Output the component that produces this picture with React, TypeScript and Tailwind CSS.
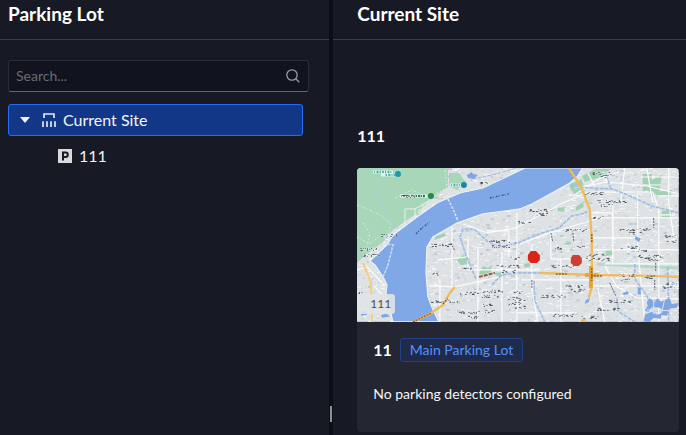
import { useState } from "react";

type Label = [x: number, y: number, width: number];

// Place-name marks, too small to read at this scale
const labels: Label[] = [
  [24, 67, 16], [3, 81, 19], [6, 87, 17], [44, 28, 14], [72, 77, 22], [75, 106, 7],
  [74, 133, 28], [103, 125, 18], [124, 123, 22], [125, 128, 16], [131, 73, 28], [134, 78, 20],
  [106, 100, 10], [140, 98, 22], [145, 103, 14], [154, 90, 8], [150, 130, 14], [151, 136, 13],
  [102, 144, 20], [110, 149, 14], [124, 137, 13], [128, 143, 9], [160, 54, 13], [158, 133, 10],
  [172, 42, 20], [178, 46, 14], [209, 62, 21], [228, 25, 18], [239, 33, 30],
  [244, 37, 12], [236, 5, 18], [242, 8, 10], [263, 61, 30], [270, 65, 14], [280, 82, 12],
  [279, 88, 26], [288, 91, 20], [264, 79, 16], [197, 80, 10], [220, 79, 9], [230, 87, 18],
  [228, 91, 26], [194, 98, 24], [209, 118, 18], [214, 122, 14], [263, 107, 14], [264, 111, 10],
  [184, 128, 27], [195, 147, 22], [225, 149, 16], [239, 141, 24], [252, 133, 22],
  [287, 109, 10], [307, 68, 14], [310, 73, 9], [309, 115, 11], [306, 119, 15],
  [0, 125, 7], [157, 124, 9], [158, 139, 10], [123, 15, 10], [236, 49, 10],
];

const minorRoads = [
  "M159 60L206 35L232 24", "M163 76L190 66L240 51", "M130 63H152V90", "M111 72V102H184",
  "M194 65V91H245", "M235 50H322", "M235 70H281", "M256 33V96", "M281 26V80L288 154",
  "M302 42V154", "M234 45H256V70", "M235 82H322", "M248 96H322M165 112H234", "M175 76V120L181 154",
  "M204 91V154", "M121 80V154", "M145 84V154", "M81 92L112 89", "M72 118L98 119L142 109",
  "M106 56L130 65L159 60", "M236 24H296L302 42", "M268 0L264 34", "M218 20L250 14L290 18L322 26",
  "M0 102L10 99L27 117", "M17 118L30 132", "M248 98L260 119L280 130L322 131", "M290 0L296 35",
  "M312 0V35L318 76", "M161 145H220", "M235 118H322", "M241 120L248 154", "M83 111V154M95 58V117M160 45V154",
  "M284 9H318M286 17H304M300 28H322M304 47H318", "M216 28L242 11L262 4", "M231 5L238 18M246 4L250 14",
];

// Deterministic scatter used for the building texture and label strokes
const scatter = (count: number, seed: number) => {
  let value = seed;
  const next = () => {
    value = (value * 16807) % 2147483647;
    return value / 2147483647;
  };
  return Array.from({ length: count }, () => ({
    x: Math.floor(next() * 322),
    y: Math.floor(next() * 154),
    size: 1 + Math.floor(next() * 4),
    tone: next(),
  }));
};

const blocks = scatter(2600, 4711);
const marks = labels.map(([x, y, width], i) => ({
  x,
  y,
  width,
  strokes: scatter(Math.round(width * 0.8), i * 331 + 97).map((s) => ({
    x: x + (s.x % width),
    y: y + (s.y % 3) - 1,
    w: 1 + (s.size > 2 ? 1 : 0),
    opacity: 0.4 + s.tone * 0.5,
  })),
}));

const CityMap = () => (
  <svg
    viewBox="0 0 322 154"
    className="block w-full"
    role="img"
    aria-label="Map of site 111"
  >
    <rect width="322" height="154" fill="#dee2e5" />
    {blocks.map((b, i) => (
      <rect
        key={i}
        x={b.x}
        y={b.y}
        width={b.size}
        height={b.tone > 0.5 ? 1 : 2}
        fill={b.tone > 0.48 ? "#f3f5f6" : b.tone > 0.1 ? "#d5dadd" : "#c3cbd0"}
      />
    ))}

    {/* Parks */}
    <path d="M0 0H91V19L73 32L60 45L36 62L26 74L6 89L0 95Z" fill="#a8d6b8" />
    <path d="M92 5L102 5L109 14L100 22L92 18Z" fill="#a8d6b8" />
    <g fill="#a1d1b2">
      <path d="M101 90l6-3 6 4-1 5-8 1-4-4z" />
      <path d="M79 68l9-3 1 3-12 4z" />
      <path d="M213 16l12-5 3 12-10 4-5-7z" />
      <path d="M225 8l14-7h15l-10 8-16 5z" />
      <path d="M286 6l9 0 0 6 10-5-2 16-7 4-6-5-4 2z" />
      <path d="M299 24l16-2-1 6-8-1-6 3z" />
      <path d="M305 43l10-1v7l-10 1zM249 82l7-1v6l-7 1z" />
      <path d="M219 39l7-5 1 5-8 4zM201 40l7-1-1 5-6-1z" />
      <path d="M122 106l4-8 5 2 4-3-1 7-9 3zM137 105l9-1 2 3-6 3zM167 96l5-1 2 3-6 2zM207 76l7-2 1 2-5 1z" />
    </g>
    <path d="M240 96L280 98L322 100" stroke="#b9d6c8" strokeWidth="3" fill="none" />
    <g stroke="#dcf1e4" fill="none" strokeDasharray="2 2 1 2">
      <path d="M22 3L21 30L30 47L36 55L33 63" strokeWidth="2" stroke="#a9cfe0" />
      <path d="M0 37L10 41L23 47L34 56L31 66" />
      <path d="M53 62L64 38L80 26" />
      <path d="M88 2L90 20L76 28M0 69L12 76L27 66M6 55L13 65L10 79" />
      <path d="M38 30L55 22L72 30" />
    </g>
    <path d="M48 57V41H58V50M58 41L72 33M66 36V45" stroke="#e6f3eb" fill="none" />

    {/* Minor roads */}
    <g fill="none" stroke="#fbfcfc" strokeWidth="1.2">
      {minorRoads.map((d) => (
        <path key={d} d={d} />
      ))}
    </g>

    {/* Points of interest */}
    <path d="M16 4h20M24 7h14M43 28h27M93 17h12" stroke="#dff4f1" strokeWidth="3" strokeDasharray="4 1 2 1" />
    <path d="M17 4h18M29 7h9M94 17h9" stroke="#2c9d9c" strokeWidth="1.6" strokeDasharray="1 1.5 2 1" />
    <path d="M44 28h24" stroke="#39705a" strokeWidth="2" strokeDasharray="1 1 2 1" />
    <circle cx="41" cy="6" r="3" fill="#179aab" />
    <circle cx="107" cy="17" r="3" fill="#1588a8" />
    <circle cx="74" cy="28" r="3" fill="#238a49" />

    {/* River */}
    <path
      d="M168 0L126 20L103 25L80 35L60 49L36 67L30 77L13 93L18 97L26 109L30 117L29 125L36 154H82L76 142L71 129L69 105L70 79L76 69L100 55L126 46L163 41L175 36L195 25L213 15L220 9L226 0Z"
      fill="#80a7e6"
      stroke="#eef1f3"
      strokeWidth="1.2"
    />
    <path d="M26 109L31 97L36 77L31 76L27 68" stroke="#c9dbf1" strokeWidth="1.6" strokeDasharray="3 1" fill="none" />
    <path d="M91 31L96 41L101 53" stroke="#d9e6f7" strokeWidth="1.5" strokeDasharray="3 1" />
    <path d="M59 66L65 60L73 54M133 30L142 28L152 26" fill="none" stroke="#375f9e" strokeWidth="1.4" strokeDasharray="2 1 1 2" />

    {/* Canals and lakes */}
    <g fill="none" stroke="#9fbce5" strokeWidth="1.6" strokeDasharray="4 1">
      <path d="M119 111L109 87L103 69L106 61L117 61L130 73L142 79L161 75L185 65L202 60L215 48L230 45" />
      <path d="M213 18L232 20L256 21L271 27L295 38L322 45M254 21L249 4" />
      <path d="M135 117L145 107L163 105H184M177 113L178 133L188 154M278 96V111L290 128L299 147" />
      <path d="M116 11L139 6L160 0" strokeWidth="1" />
      <path d="M260 130L262 144L278 154M311 99L312 154M315 114L320 118" />
    </g>
    <g fill="#7fa5e2">
      <path d="M110 7l5-3 1 2 5 1-4 4-6-1zM5 144l5-1v4l-6 1zM24 147l6-1 2 3-7 1z" />
      <path d="M293 130l5 4 3-4 4 5-5 5-5-1-3 5-4-1 3-5-1-4z" />
      <path d="M303 134l10-4 2 6 7-1-2 5-7 1-3 7-6-1 1-6-5-2z" />
      <path d="M288 147l7-3 4 3 6-1-1 5-7-1-4 4h-6zM229 132l4-2-1 4-4 2z" />
      <path d="M279 68l5 3-2 3-4-3zM281 119l3 1v7l-3-1zM266 125l5-2 1 3-5 1z" />
    </g>
    <path d="M297 132v14M308 131l-3 14M290 142l25 1" stroke="#d8e2ee" fill="none" />

    {/* Highways */}
    <g fill="none" stroke="#f0bb5a" strokeWidth="2.4">
      <path d="M6 95L14 115L15 154" strokeWidth="2" stroke="#f5ce7b" />
      <path d="M56 154L73 146L86 137L93 125L98 119" />
      <path d="M212 0L225 20L233 42L235 72V119L232 130" />
      <path d="M183 105L234 107L291 108L322 109" />
      <path d="M224 154l5-3" />
    </g>
    <path d="M234 98V120M228 107h13" stroke="#e5a333" strokeWidth="3.5" />
    <path d="M56 154L75 145M86 136l5-5M199 106h11M234 108h11M290 108h8M235 66v8M235 100v13" stroke="#8f6430" strokeWidth="1.5" strokeDasharray="2 1" />
    <path d="M122 109L138 105" stroke="#925e3f" strokeWidth="2" strokeDasharray="4 1" />
    <path d="M94 75l4 8M253 115l6 13M297 50v10M299 95v9M298 112v10M194 65l2 9M216 65l1 9M175 112v8" stroke="#59636e" strokeDasharray="2 1" />

    {/* Labels */}
    {marks.map((mark) => (
      <g key={`${mark.x}-${mark.y}`}>
        <path d={`M${mark.x} ${mark.y}h${mark.width}`} stroke="#f8fafb" strokeWidth="3" strokeOpacity="0.35" />
        {mark.strokes.map((s, i) => (
          <rect key={i} x={s.x} y={s.y} width={s.w} height="1" fill="#3f4852" fillOpacity={s.opacity} />
        ))}
      </g>
    ))}

    {/* Site pins */}
    <path d="M174 83h5l4 4v5l-3 3h-6l-3-3v-5z" fill="#da2417" />
    <path d="M216 87h6l3 3v5l-3 3h-5l-3-3v-5z" fill="#cf4034" />
  </svg>
);

const GateIcon = () => (
  <svg width="14" height="14" viewBox="0 0 14 14" fill="none" stroke="#e3e8f3" aria-hidden="true">
    <path d="M2 5V1H12V5" strokeWidth="1.7" />
    <path d="M1 8.3V14M5 8.3V14M9 8.3V14M13 8.3V14" strokeWidth="1.7" />
  </svg>
);

const ParkingIcon = () => (
  <svg width="14" height="14" viewBox="0 0 14 14" aria-hidden="true">
    <path d="M0 0h14v14H0z" fill="#d9dadc" />
    <path d="M5 11.5V3.5h2.6a2.2 2.2 0 0 1 0 4.4H5" fill="none" stroke="#171a24" strokeWidth="2" />
  </svg>
);

const SearchIcon = () => (
  <svg width="14" height="14" viewBox="0 0 14 14" fill="none" stroke="#9a9ca2" strokeWidth="1.3" aria-hidden="true">
    <circle cx="6" cy="6" r="5.2" />
    <path d="M9.8 9.8L13.3 13.3" />
  </svg>
);

const App = () => {
  const [query, setQuery] = useState("");
  const [open, setOpen] = useState(true);

  return (
    <div className="flex min-h-screen bg-[#171a24] font-['Lato',sans-serif] text-[#f4f5f7]">
      <aside className="w-[48%] shrink-0">
        <header className="flex h-10 items-start border-b border-[#3a3d46] px-2 pt-0.5">
          <h1 className="text-[19px] leading-6 font-bold text-white">Parking Lot</h1>
        </header>

        <div className="pt-5 pr-5 pl-2">
          <label className="flex h-8 items-center rounded-[3px] border border-[#2a2d37] border-b-[#62656c] bg-[#11141e] pr-2 pl-[7px]">
            <input
              type="text"
              aria-label="Search"
              placeholder="Search..."
              value={query}
              onChange={(e) => setQuery(e.target.value)}
              className="min-w-0 flex-1 bg-transparent text-sm leading-5 outline-none placeholder:text-[#686b72]"
            />
            <SearchIcon />
          </label>

          <nav className="mt-3 pr-1.5">
            <button
              type="button"
              aria-expanded={open}
              onClick={() => setOpen(!open)}
              className="flex h-8 w-full items-center rounded-[3px] border border-[#256bf4] bg-[#123786] pl-[11px] text-base"
            >
              <svg width="10" height="6" viewBox="0 0 10 6" aria-hidden="true">
                <path d="M0 0h10L5 6z" fill="#f0f3fa" />
              </svg>
              <span className="ml-3">
                <GateIcon />
              </span>
              <span className="ml-[7px]">Current Site</span>
            </button>
            {open && (
              <button type="button" className="mt-1 flex h-8 w-full items-center gap-[7px] pl-[50px] text-base">
                <ParkingIcon />
                111
              </button>
            )}
          </nav>
        </div>
      </aside>

      <div className="flex w-1 shrink-0 items-end justify-center bg-[#0b0e16] pb-[13px]">
        <div className="h-4 w-0.5 bg-[#8d8f93]" />
      </div>

      <main className="min-w-0 flex-1">
        <header className="flex h-10 items-start border-b border-[#3a3d46] px-6 pt-0.5">
          <h2 className="text-[19px] leading-6 font-bold text-white">Current Site</h2>
        </header>

        <section className="pt-[84px] pr-[7px] pb-[3px] pl-6">
          <h3 className="text-base leading-6 font-bold text-white">111</h3>

          <article className="mt-5 overflow-hidden rounded bg-[#242731]">
            <div className="relative">
              <CityMap />
              <span className="absolute bottom-2 left-0 rounded-r-[3px] bg-[#e0e4e7]/90 pr-1 pl-[13px] text-xs leading-5 text-[#4b4d52]">
                111
              </span>
            </div>
            <div className="px-4 pt-4 pb-[26px]">
              <div className="flex items-center gap-2">
                <h4 className="text-base leading-6 font-bold text-white">11</h4>
                <span className="rounded-[3px] border border-[#204189] bg-[#202b4c] px-[9px] text-sm leading-[22px] text-[#5590fa]">
                  Main Parking Lot
                </span>
              </div>
              <p className="mt-5 text-sm leading-6">No parking detectors configured</p>
            </div>
          </article>
        </section>
      </main>
    </div>
  );
};

export default App;
